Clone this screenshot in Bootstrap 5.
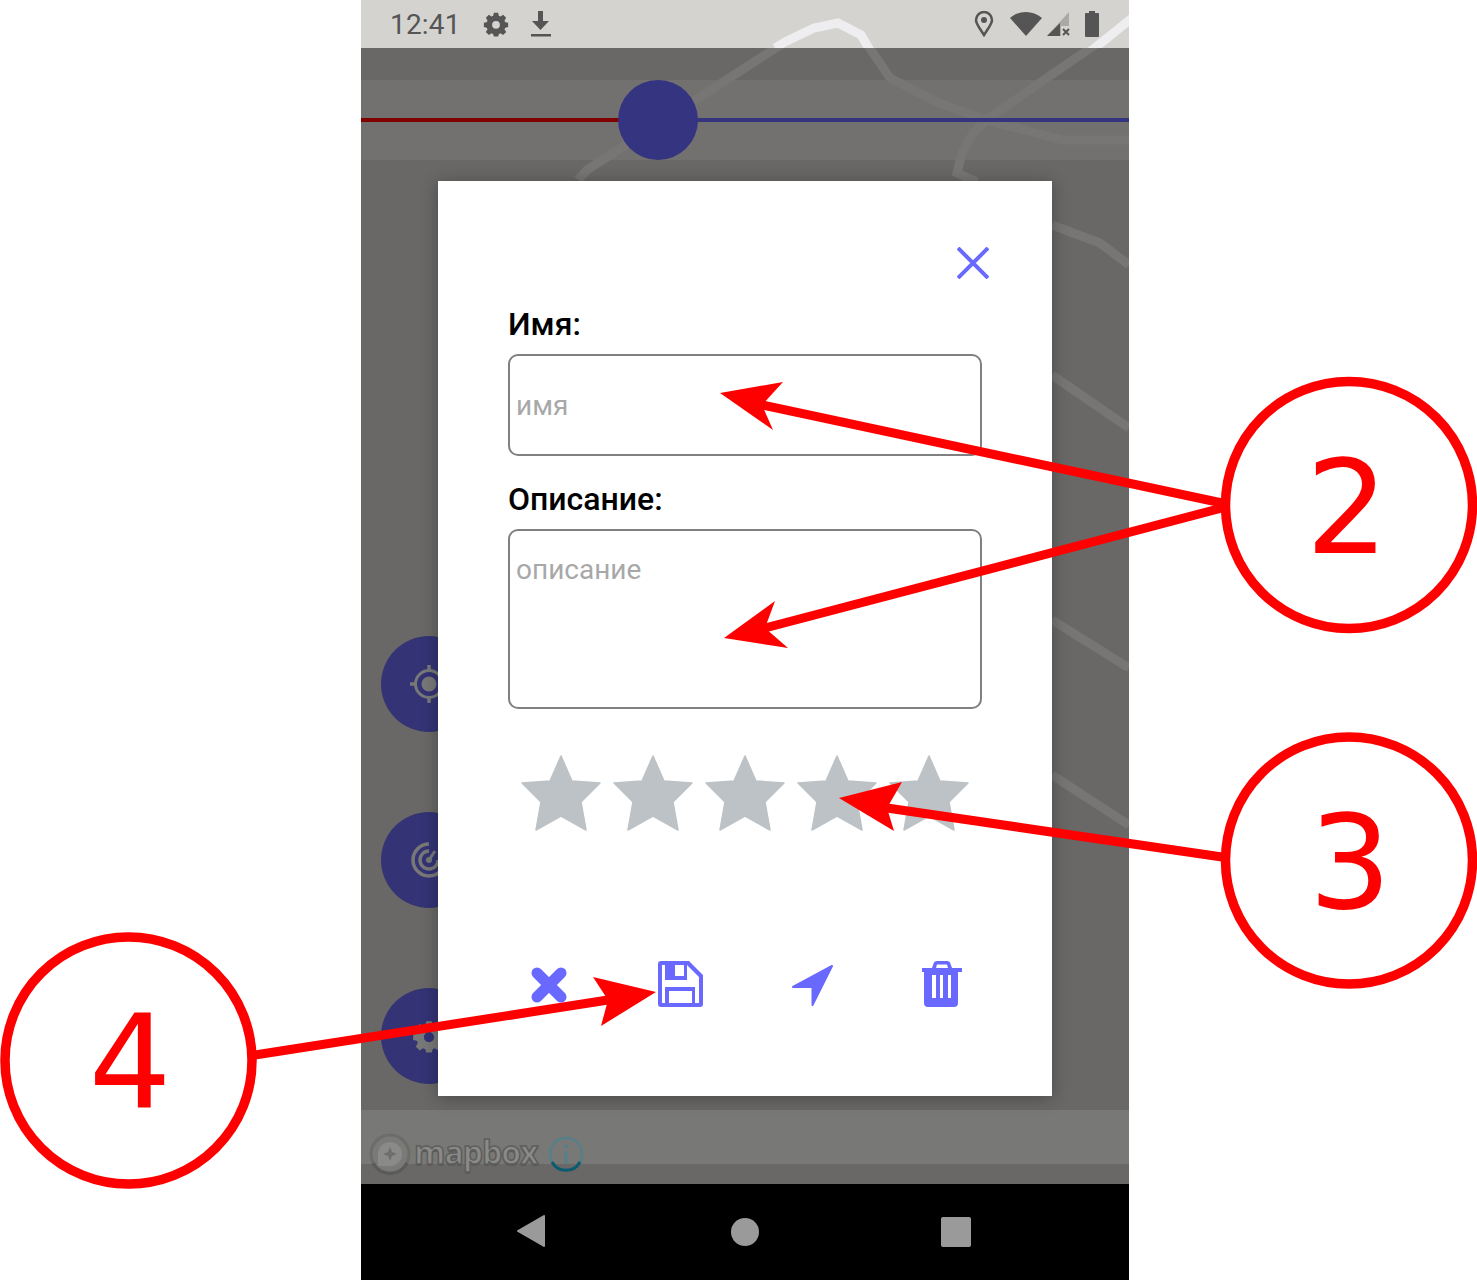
<!DOCTYPE html>
<html lang="en">
<head>
    <meta charset="UTF-8">
    <meta name="viewport" content="width=device-width, initial-scale=1.0">
    <title>Map point form</title>
    <link href="https://cdn.jsdelivr.net/npm/bootstrap@5.3.0/dist/css/bootstrap.min.css" rel="stylesheet">
    <style>
        body { background: #fff; font-family: Roboto, "Liberation Sans", sans-serif; }
        .page-wrap { width: 1477px; height: 1280px; padding-left: 361px; position: relative; overflow: hidden; }
        .phone { width: 768px; height: 1280px; position: relative; }
        .road-layer { position: absolute; left: 0; top: 0; width: 768px; height: 1184px; z-index: 1; }
        .status-strip { height: 48px; background: #d4d3cf; padding: 0 30px 0 29px; color: #555; }
        .status-strip > * { position: relative; z-index: 2; }
        .status-time { font-size: 28px; line-height: 48px; width: 93px; padding-top: 2px; letter-spacing: .2px; }
        .ico-gear { margin-right: 21px; }
        .ico-pin { margin-right: 16px; }
        .ico-wifi { margin-right: 5px; }
        .ico-signal { margin-right: 14px; }
        .map-area { height: 1136px; background: #696866; position: relative; }
        .band-top { height: 80px; margin-top: 32px; background: #72716f; }
        .route-line { position: absolute; top: 70px; height: 4px; z-index: 2; }
        .route-done { left: 0; width: 260px; background: #800000; }
        .route-next { left: 300px; right: 0; background: #34347f; }
        .route-dot { position: absolute; left: 257px; top: 32px; width: 80px; height: 80px; background: #343480; border-radius: 50%; z-index: 2; }
        .side-btn { position: absolute; left: 20px; width: 96px; height: 96px; border-radius: 50%; background: #333376; z-index: 2; }
        .side-target { top: 588px; }
        .side-radar { top: 764px; }
        .side-gear { top: 940px; }
        .band-bottom { position: absolute; left: 0; right: 0; top: 1062px; height: 54px; background: #787876; }
        .map-brand { position: absolute; left: 8px; top: 1085px; z-index: 2; }
        .brand-word { font: 700 32px/44px "Open Sans", sans-serif; color: #8a8a88; -webkit-text-stroke: 1.5px #5e5e5c; text-shadow: 0 2px 0 #5a5a58; letter-spacing: -1px; margin: -5px 10px 0 3px; }
        .form-sheet { position: absolute; left: 77px; top: 133px; width: 614px; height: 915px; background: #fff; box-shadow: 0 2px 16px rgba(0,0,0,.3); padding: 66px 70px 0 70px; z-index: 3; }
        .close-btn { width: 32px; height: 32px; margin: 0 -7px 0 auto; display: block; }
        .field-title { font-size: 32px; font-weight: 500; line-height: 36px; margin: 0 0 12px; color: #000; }
        .field-first { margin-top: 27px; }
        .field-box { width: 474px; border: 2px solid #808080; border-radius: 10px; padding: 0 6px; font-size: 28px; color: #333; box-shadow: none; }
        .field-box::placeholder { color: #a8a8a8; opacity: 1; }
        .field-name { height: 102px; margin-bottom: 25px; padding-top: 0; }
        .field-desc { height: 180px; padding-top: 18px; resize: none; }
        .star-row { margin-top: 45px; padding-left: 13px; gap: 12px; }
        .action-row { margin-top: 129px; }
        .act-cancel { margin-left: 23px; }
        .act-save { margin-left: 91px; }
        .act-go { margin-left: 88px; }
        .act-trash { margin-left: 87px; }
        .nav-strip { height: 96px; background: #000; }
        .nav-back { margin-left: 155px; }
        .nav-home { margin-left: 185px; }
        .nav-recent { margin-left: 182px; }
        .note-layer { position: absolute; left: 0; top: 0; width: 1477px; height: 1280px; z-index: 5; pointer-events: none; }
        .note-digit { font: 130px "DejaVu Sans", sans-serif; fill: #f00; text-anchor: middle; }
    </style>
</head>
<body>
<div class="page-wrap">
    <div class="phone d-flex flex-column">
        <div class="status-strip d-flex align-items-center">
            <span class="status-time">12:41</span>
            <svg class="ico-gear" width="26" height="26" viewBox="-2 -2 30 30"><use href="#gearShape" fill="#555"/></svg>
            <svg width="22" height="30" viewBox="0 0 22 30"><path fill="#555" d="M8 2h5v10h6L10.500 21 2 12h6z"/><rect x="1" y="25" width="20" height="2.500" fill="#555"/></svg>
            <div class="ms-auto d-flex align-items-center">
                <svg class="ico-pin" width="20" height="26" viewBox="0 0 20 26"><path fill="none" stroke="#555" stroke-width="2.500" d="M10 24C5 16 2 13 2 9a8 8 0 0 1 16 0c0 4-3 7-8 15z"/><circle cx="10" cy="9" r="3" fill="#555"/></svg>
                <svg class="ico-wifi" width="32" height="24" viewBox="0 0 32 24"><path fill="#555" d="M16 24L0 6C9-2 23-2 32 6z"/></svg>
                <svg class="ico-signal" width="24" height="24" viewBox="0 0 24 24"><path fill="#aaa9a6" d="M22 0v14h-8v10H0z"/><path fill="#555" d="M13 11v13H0z"/><path stroke="#555" stroke-width="2" d="M16 17l6 6M22 17l-6 6"/></svg>
                <svg width="14" height="26" viewBox="0 0 14 26"><path fill="#555" d="M4 0h6v2h3a1 1 0 0 1 1 1v22a1 1 0 0 1-1 1H1a1 1 0 0 1-1-1V3a1 1 0 0 1 1-1h3z"/></svg>
            </div>
        </div>
        <div class="map-area">
            <div class="band-top"></div>
            <div class="route-line route-done"></div>
            <div class="route-line route-next"></div>
            <div class="route-dot"></div>
            <div class="side-btn side-target d-flex align-items-center justify-content-center">
                <svg width="40" height="40" viewBox="0 0 40 40"><circle cx="20" cy="20" r="13.500" fill="none" stroke="#787878" stroke-width="3"/><circle cx="20" cy="20" r="7.500" fill="#787878"/><path stroke="#787878" stroke-width="3.500" d="M20 1v6M20 33v6M1 20h6M33 20h6"/></svg>
            </div>
            <div class="side-btn side-radar d-flex align-items-center justify-content-center">
                <svg width="40" height="40" viewBox="0 0 40 40"><g fill="none" stroke="#787878" stroke-width="3.500"><path d="M20 4a16 16 0 1 0 16 16"/><path d="M20 11a9 9 0 1 0 9 9"/></g><circle cx="20" cy="20" r="3" fill="#787878"/><path stroke="#787878" stroke-width="3" d="M20 20l6-9"/></svg>
            </div>
            <div class="side-btn side-gear d-flex align-items-center justify-content-center">
                <svg width="34" height="34" viewBox="-2 -2 30 30"><use href="#gearShape" fill="#787878"/></svg>
            </div>
            <div class="band-bottom"></div>
            <div class="map-brand d-flex align-items-center">
                <svg width="42" height="42" viewBox="0 0 42 42"><circle cx="21" cy="21" r="19" fill="#7a7a78" stroke="#6c6c6a" stroke-width="3"/><path fill="none" stroke="#5a5a58" stroke-width="3" d="M4 30a19 19 0 0 0 34 0"/><path fill="#8a8a88" d="M9 33V21a12 12 0 1 1 12 12z"/><path fill="#6e6e6c" d="M21 14l2 5 5 2-5 2-2 5-2-5-5-2 5-2z"/></svg>
                <span class="brand-word">mapbox</span>
                <svg width="36" height="36" viewBox="0 0 36 36"><circle cx="18" cy="18" r="16" fill="none" stroke="#55808a" stroke-width="2.500"/><path fill="none" stroke="#0c5a70" stroke-width="3" d="M4 26a16 16 0 0 0 28 0"/><rect x="16.500" y="15" width="3" height="13" fill="#55808a"/><circle cx="18" cy="10" r="2" fill="#55808a"/></svg>
            </div>
            <div class="form-sheet">
                <svg class="close-btn" viewBox="0 0 32 32"><path stroke="#6969ff" stroke-width="4" d="M1 1l30 30M31 1L1 31"/></svg>
                <label class="field-title field-first d-block" for="pointName">Имя:</label>
                <input id="pointName" type="text" class="form-control field-box field-name" placeholder="имя">
                <label class="field-title d-block" for="pointDesc">Описание:</label>
                <textarea id="pointDesc" class="form-control field-box field-desc" placeholder="описание"></textarea>
                <div class="star-row d-flex">
                    <svg width="80" height="78" viewBox="0 0 80 78"><use href="#starShape"/></svg>
                    <svg width="80" height="78" viewBox="0 0 80 78"><use href="#starShape"/></svg>
                    <svg width="80" height="78" viewBox="0 0 80 78"><use href="#starShape"/></svg>
                    <svg width="80" height="78" viewBox="0 0 80 78"><use href="#starShape"/></svg>
                    <svg width="80" height="78" viewBox="0 0 80 78"><use href="#starShape"/></svg>
                </div>
                <div class="action-row d-flex align-items-start">
                    <svg class="act-cancel" width="36" height="46" viewBox="0 0 36 46"><path fill="none" stroke="#6969ff" stroke-width="11" stroke-linecap="round" d="M6 12l24 24M30 12L6 36"/></svg>
                    <svg class="act-save" width="46" height="46" viewBox="0 0 46 46"><path fill="#6969ff" fill-rule="evenodd" d="M3 0h28l14 14v29a3 3 0 0 1-3 3H3a3 3 0 0 1-3-3V3a3 3 0 0 1 3-3zM4 4v38h3V26h30v16h4V16L29 4zM7 4v15h22V4h-3v11h-9V4zM11 30v12h23V30z"/></svg>
                    <svg class="act-go" width="42" height="46" viewBox="0 0 42 46"><path fill="#6969ff" stroke="#6969ff" stroke-width="2" stroke-linejoin="round" d="M40 5L20.500 44V26H1z"/></svg>
                    <svg class="act-trash" width="42" height="46" viewBox="0 0 42 46"><path fill="#6969ff" fill-rule="evenodd" d="M1 7h10l2-5.500Q13.500 0 16 0h10q2.500 0 3 1.500L31 7h10v4H1zM15 7h12l-1-3.500H16zM3 11h34v31a4 4 0 0 1-4 4H7a4 4 0 0 1-4-4zM11 14v23h4V14zM19 14v23h3V14zM27 14v23h3V14z"/></svg>
                </div>
            </div>
        </div>
        <div class="nav-strip d-flex align-items-center">
            <svg class="nav-back" width="30" height="34" viewBox="0 0 30 34"><path fill="#9a9a9a" stroke="#9a9a9a" stroke-width="2" stroke-linejoin="round" d="M28 1v30L2 16z"/></svg>
            <svg class="nav-home" width="28" height="28" viewBox="0 0 28 28"><circle cx="14" cy="14" r="14" fill="#9a9a9a"/></svg>
            <svg class="nav-recent" width="30" height="30" viewBox="0 0 30 30"><rect width="30" height="30" rx="2" fill="#9a9a9a"/></svg>
        </div>
        <svg class="road-layer" viewBox="0 0 768 1184">
            <defs>
                <clipPath id="clipStatus"><rect width="768" height="48"/></clipPath>
                <clipPath id="clipMap"><rect y="48" width="768" height="1136"/></clipPath>
            </defs>
            <g fill="none" stroke-width="9">
                <g stroke="#eeedf0" clip-path="url(#clipStatus)">
                    <path d="M414 48L424 42 453 28 477 23 500 35 510 52"/>
                    <path d="M775 15L725 55"/>
                </g>
                <g stroke="#777675" clip-path="url(#clipMap)">
                    <path d="M217 180L226 170 424 42 453 28 477 23 500 35 529 78 576 102 625 120 702 140H770"/>
                    <path d="M770 20L625 120 611 135 601 153 596 173 616 182"/>
                    <path d="M691 225L739 243 768 265M691 375L768 428M691 620L768 668M691 775L768 825"/>
                </g>
            </g>
        </svg>
    </div>
    <svg class="note-layer" viewBox="0 0 1477 1280">
        <defs>
            <path id="starShape" fill="#bcc2c6" stroke="#bcc2c6" stroke-width="1.500" stroke-linejoin="round" d="M40 2L51 27 79 29 60 48 65 76 40 62 15 76 20 48 1 29 29 27z"/>
            <path id="gearShape" fill-rule="evenodd" d="M10.500 0h5l.7 3.400 2 .9 3-1.900 3.500 3.500-1.900 3 .9 2L27 11.500v5l-3.300.7-.9 2 1.900 3-3.500 3.500-3-1.900-2 .9-.7 2.800h-5l-.7-2.800-2-.9-3 1.900-3.500-3.500 1.900-3-.9-2L-1 16.500v-5l3.300-.6.900-2-1.900-3L4.800 2.400l3 1.900 2-.9zM13 9.500a4.500 4.500 0 1 0 0 9 4.500 4.500 0 0 0 0-9z"/>
        </defs>
        <g fill="none" stroke="#f00" stroke-width="9.500">
            <circle cx="1349" cy="505" r="123.500"/>
            <circle cx="1349" cy="860.500" r="123.500"/>
            <circle cx="128.500" cy="1060.500" r="123.500"/>
        </g>
        <text class="note-digit" x="1347" y="553">2</text>
        <text class="note-digit" x="1350" y="908">3</text>
        <text class="note-digit" x="130" y="1107">4</text>
        <g fill="none" stroke="#f00" stroke-width="9">
            <path d="M1222 503L762 405M1222 508L765 628M1222 857L887 808M255 1055L608 1000"/>
        </g>
        <g fill="#f00">
            <path d="M720 393L783 382 762 405 773 430z"/>
            <path d="M724 638L775 601 765 628 788 648z"/>
            <path d="M839 798L902 782 887 808 894 831z"/>
            <path d="M656 992L593 977 608 1000 601 1026z"/>
        </g>
    </svg>
</div>
<script src="https://cdn.jsdelivr.net/npm/bootstrap@5.3.0/dist/js/bootstrap.bundle.min.js"></script>
</body>
</html>
